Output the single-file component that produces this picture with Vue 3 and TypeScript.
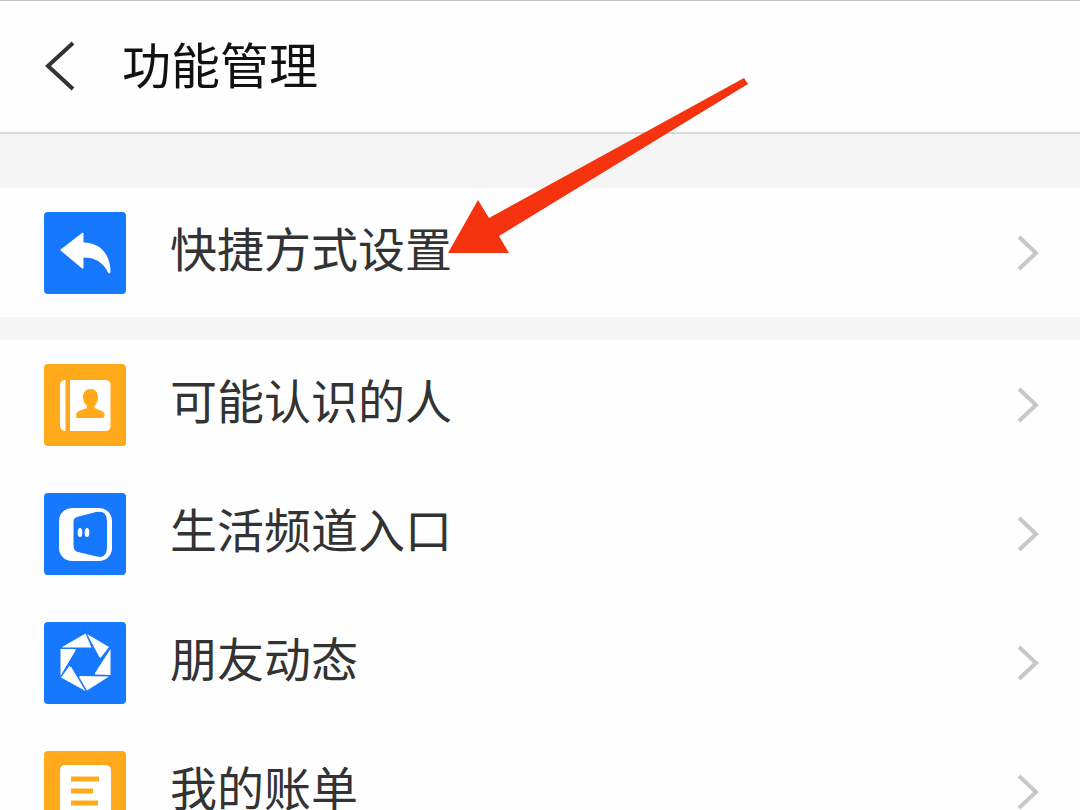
<script setup lang="ts">
type IconName = 'reply' | 'contacts' | 'channel' | 'aperture' | 'bill'

interface Item {
  label: string
  icon: IconName
  color: string
}

const blue = '#1677ff'
const amber = '#ffa91b'

const groups: Item[][] = [
  [{ label: '快捷方式设置', icon: 'reply', color: blue }],
  [
    { label: '可能认识的人', icon: 'contacts', color: amber },
    { label: '生活频道入口', icon: 'channel', color: blue },
    { label: '朋友动态', icon: 'aperture', color: blue },
    { label: '我的账单', icon: 'bill', color: amber },
  ],
]
</script>

<template>
  <div class="page">
    <header class="header">
      <button class="back" type="button" aria-label="返回">
        <svg width="32" height="52" viewBox="0 0 32 52" fill="none">
          <path d="M29 2 L4 25 L29 48" stroke="#333" stroke-width="4" />
        </svg>
      </button>
      <h1 class="title">功能管理</h1>
    </header>

    <main class="groups">
      <ul v-for="(group, i) in groups" :key="i" class="group">
        <li v-for="item in group" :key="item.label">
          <a class="row" href="#">
            <svg class="icon" viewBox="0 0 82 82" aria-hidden="true">
              <rect width="82" height="82" rx="4" :fill="item.color" />
              <path
                v-if="item.icon === 'reply'"
                fill="#fff"
                d="M16 38 L38 21 Q39.500 20 39.500 22 V30.500 C55 30.500 66 41 66.500 59 Q66.500 63 64 60.500 C59 50 51 45.500 39.500 45.500 V55 Q39.500 57.500 37.500 56 Z"
              />
              <g v-else-if="item.icon === 'contacts'">
                <path fill="#fff" d="M20 16 H21.500 V67 H20 Q16 65 16 61 V21 Q16 17 20 16 Z" />
                <path fill="#fff" d="M26 16 H61 Q66.500 16 66.500 21 V62 Q66.500 67 61 67 H26 Z" />
                <path
                  :fill="item.color"
                  d="M46.500 25 C51 25 54 28 54 33 C54 37 52.500 40 50.500 42 V44 L58 47 Q61 49 60.500 52 Q60 54 58 54 H35 Q32 54 32 52 Q32 48 35 47 L43 44 V42 C40.500 40 39 37 39 33 C39 28 42 25 46.500 25 Z"
                />
              </g>
              <g v-else-if="item.icon === 'channel'">
                <rect x="15" y="15" width="53" height="53" rx="13" fill="#fff" />
                <path
                  :fill="item.color"
                  d="M33 24 L52 19 Q63 17 63 28 V54 Q63 66 53 63.500 L34 59 Q29.500 58 29.500 53 V29 Q29.500 25 33 24 Z"
                />
                <ellipse cx="36" cy="39.500" rx="2.300" ry="4.500" fill="#fff" />
                <ellipse cx="43" cy="39.500" rx="2.300" ry="4.500" fill="#fff" />
              </g>
              <g v-else-if="item.icon === 'aperture'" fill="#fff">
                <path d="M41.500 11.500 L47.500 25.500 H18 L19 24.500 Z" />
                <path d="M43 12 L65 25 L56.500 36 L55 34.500 Z" />
                <path d="M66.500 27 V53 L51 52.500 V51 Z" />
                <path d="M65 54.500 L43 68.500 L35 55 L36 54 Z" />
                <path d="M41.500 69 L17 55.500 L25.500 44 L27.500 45.500 Z" />
                <path d="M16.500 54 V27 H31.500 V28.500 Z" />
              </g>
              <g v-else>
                <rect x="16" y="14" width="51" height="55" rx="5" fill="#fff" />
                <path
                  fill="none"
                  :stroke="item.color"
                  stroke-width="5"
                  d="M27 28 H55 M27 40 H49 M27 52 H54"
                />
              </g>
            </svg>
            <span class="label">{{ item.label }}</span>
            <svg class="chevron" viewBox="0 0 24 38" fill="none" aria-hidden="true">
              <path d="M3 3 L20 19 L3 35" stroke="#c7c7c7" stroke-width="4" />
            </svg>
          </a>
        </li>
      </ul>
    </main>

    <svg class="pointer" viewBox="0 0 300 176" aria-hidden="true">
      <path fill="#f5330f" d="M0 175 L30 122 L41 140 L296 0 L300 6 L51 158 L61 175 Z" />
    </svg>
  </div>
</template>

<style>
body {
  margin: 0;
}
</style>

<style scoped>
.page {
  position: relative;
  box-sizing: border-box;
  height: 100vh;
  overflow-x: hidden;
  overflow-y: auto;
  scrollbar-width: none;
  background: #f5f5f5;
  border-top: 1px solid #c4c4c4;
  font-family: 'Noto Sans CJK SC', 'Noto Sans', sans-serif;
}

.header {
  display: flex;
  align-items: center;
  gap: 46px;
  padding: 28px 44px;
  background: #fefefe;
  border-bottom: 2px solid #d8d8d8;
}

.back {
  display: flex;
  padding: 0;
  border: 0;
  background: none;
  cursor: pointer;
}

.title {
  margin: 0;
  padding-bottom: 8px;
  font-size: 49px;
  font-weight: 400;
  line-height: 67px;
  color: #111;
}

.groups {
  display: flex;
  flex-direction: column;
  gap: 23px;
  padding-top: 54px;
}

.group {
  margin: 0;
  padding: 0;
  list-style: none;
  background: #fefefe;
}

.row {
  display: flex;
  align-items: center;
  padding: 24px 40px 23px 44px;
  color: #333;
  text-decoration: none;
}

.icon {
  flex: none;
  width: 82px;
  height: 82px;
}

.label {
  flex: 1;
  padding: 0 44px 12px;
  font-size: 47px;
  line-height: 70px;
}

.chevron {
  flex: none;
  width: 24px;
  height: 38px;
}

.pointer {
  position: absolute;
  top: 77px;
  left: 448px;
  width: 300px;
  height: 176px;
}
</style>
